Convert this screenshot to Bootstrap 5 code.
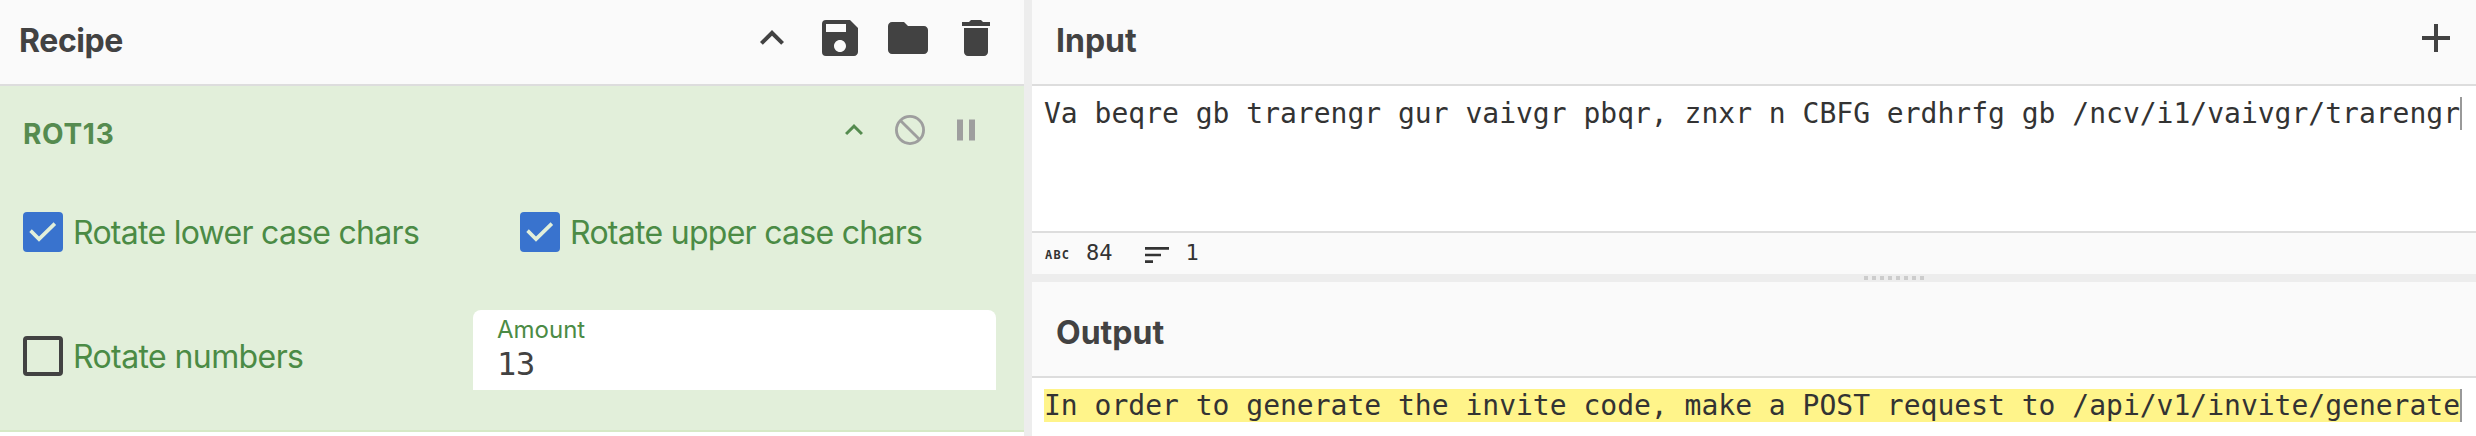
<!DOCTYPE html>
<html lang="en">
<head>
<meta charset="utf-8">
<title>Recipe</title>
<link href="https://cdn.jsdelivr.net/npm/bootstrap@5.3.0/dist/css/bootstrap.min.css" rel="stylesheet">
<style>
body{width:2476px;height:436px;overflow:hidden;background:#ededed;color:#424242;font-family:Inter,sans-serif}
svg{display:block;fill:currentColor;flex:none}
.recipe-pane{width:1024px}
.io-pane{width:1444px;margin-left:8px}
.pane-head{background:#fafafa;border-bottom:2px solid #ddd;height:86px;padding:0 16px 8px 24px}
.recipe-head{padding-left:19px;padding-right:24px}
.output-head{height:96px;padding-top:2px;padding-bottom:0}
.pane-title{font-size:32px;line-height:40px;font-weight:700;padding-top:5px}
.recipe-head .pane-title{letter-spacing:-.4px}
.operation{height:346px;background:#e2efda;border-bottom:2px solid #d6e9c6}
.op-head{padding:26px 40px 0 23px}
.op-name{font-size:28px;line-height:40px;font-weight:700;color:#558b4f;margin-top:2px;letter-spacing:.7px}
.op-icons{gap:20px;color:#9e9e9e}
.arg-row{padding:58px 0 0 23px}
.arg-row + .arg-row{padding-top:57px}
.arg-first{width:497px}
.arg-numbers{width:450px;margin-top:26px}
.box{width:40px;height:40px;border-radius:4px;background:#3973ce;color:#e2efda;margin-right:10px}
.box-off{background:none;border:4px solid #424242}
.arg-label{font-size:32px;line-height:41px;color:#4b8b45;letter-spacing:-.72px}
.arg-numbers .arg-label{letter-spacing:-.6px}
.amount{width:523px;height:80px;background:#fff;border-radius:8px 8px 0 0;padding:6px 24px}
.amount-label{font-size:24px;line-height:28px;color:#4b8b45;margin-bottom:2px}
.mono{font-family:"DejaVu Sans Mono",monospace;white-space:pre}
.amount-value{font-size:32px;line-height:36px;letter-spacing:-.2px}
.editor{padding:11px 0 0 12px}
.code-line{font-size:28px;line-height:33px;color:#333}
.caret{width:2px;height:33px;background:#999}
.hl{background:#fff48a}
.statusbar{height:43px;background:#fafafa;border-top:2px solid #ddd;font-size:22px;line-height:30px;color:#333;padding-left:13px}
.abc{font-size:12px;font-weight:700;letter-spacing:1.2px;width:41px;padding-top:3px}
.count{padding-bottom:2px}
.lines-icon{margin:3px 13px 0 28px}
.gutter{height:8px;padding-left:832px}
.grip{width:60px;height:4px;background:repeating-linear-gradient(90deg,#ccc 0 4px,transparent 4px 8px)}
</style>
</head>
<body class="d-flex">
<section class="recipe-pane bg-white">
  <header class="pane-head recipe-head d-flex align-items-center justify-content-between">
    <span class="pane-title">Recipe</span>
    <div class="d-flex" style="gap:20px">
      <svg width="48" height="48" viewBox="0 0 24 24"><path d="M12 8l-6 6 1.41 1.41L12 10.83l4.59 4.58L18 14z"/></svg>
      <svg width="48" height="48" viewBox="0 0 24 24"><path d="M17 3H5a2 2 0 0 0-2 2v14a2 2 0 0 0 2 2h14c1.1 0 2-.9 2-2V7l-4-4zm-5 16c-1.66 0-3-1.34-3-3s1.34-3 3-3 3 1.34 3 3-1.34 3-3 3zm3-10H5V5h10v4z"/></svg>
      <svg width="48" height="48" viewBox="0 0 24 24"><path d="M10 4H4c-1.1 0-1.99.9-1.99 2L2 18c0 1.1.9 2 2 2h16c1.1 0 2-.9 2-2V8c0-1.1-.9-2-2-2h-8l-2-2z"/></svg>
      <svg width="48" height="48" viewBox="0 0 24 24"><path d="M6 19c0 1.1.9 2 2 2h8c1.1 0 2-.9 2-2V7H6v12zM19 4h-3.5l-1-1h-5l-1 1H5v2h14V4z"/></svg>
    </div>
  </header>
  <div class="operation">
    <div class="op-head d-flex justify-content-between">
      <span class="op-name">ROT13</span>
      <div class="op-icons d-flex">
        <svg width="36" height="36" viewBox="0 0 24 24" color="#558b4f"><path d="M12 8l-6 6 1.41 1.41L12 10.83l4.59 4.58L18 14z"/></svg>
        <svg width="36" height="36" viewBox="0 0 24 24"><g fill="none" stroke="currentColor" stroke-width="1.9"><circle cx="12" cy="12" r="9.050"/><path d="M5.600 5.600l12.800 12.800"/></g></svg>
        <svg width="36" height="36" viewBox="0 0 24 24"><path d="M6 19h4V5H6v14zm8-14v14h4V5h-4z"/></svg>
      </div>
    </div>
    <div class="arg-row d-flex">
      <div class="arg-first d-flex"><span class="box"><svg width="40" height="40" viewBox="0 0 40 40"><path d="M6.300 20l2.500-2.800 7.200 7.300L30.600 10.300l2.500 2.700L16 29.700z"/></svg></span><span class="arg-label">Rotate lower case chars</span></div>
      <div class="d-flex"><span class="box"><svg width="40" height="40" viewBox="0 0 40 40"><path d="M6.300 20l2.500-2.800 7.200 7.300L30.600 10.300l2.500 2.700L16 29.700z"/></svg></span><span class="arg-label">Rotate upper case chars</span></div>
    </div>
    <div class="arg-row d-flex align-items-start">
      <div class="arg-numbers d-flex"><span class="box box-off"></span><span class="arg-label">Rotate numbers</span></div>
      <div class="amount"><div class="amount-label">Amount</div><div class="mono amount-value">13</div></div>
    </div>
  </div>
</section>
<section class="io-pane">
  <header class="pane-head d-flex align-items-center justify-content-between">
    <span class="pane-title">Input</span>
    <svg width="48" height="48" viewBox="0 0 24 24"><path d="M19 13h-6v6h-2v-6H5v-2h6V5h2v6h6z"/></svg>
  </header>
  <div class="editor bg-white" style="height:145px">
    <div class="mono code-line d-flex"><span>Va beqre gb trarengr gur vaivgr pbqr, znxr n CBFG erdhrfg gb /ncv/i1/vaivgr/trarengr</span><span class="caret"></span></div>
  </div>
  <div class="statusbar mono d-flex align-items-center"><span class="abc">ABC</span><span class="count">84</span><svg class="lines-icon" width="32" height="32" viewBox="0 0 24 24"><path d="M3 18h6v-2H3v2zM3 6v2h18V6H3zm0 7h12v-2H3v2z"/></svg><span class="count">1</span></div>
  <div class="gutter d-flex align-items-center"><div class="grip"></div></div>
  <header class="pane-head output-head d-flex align-items-center">
    <span class="pane-title">Output</span>
  </header>
  <div class="editor bg-white" style="height:58px">
    <div class="mono code-line d-flex"><span class="hl">In order to generate the invite code, make a POST request to /api/v1/invite/generate</span><span class="caret"></span></div>
  </div>
</section>
<script src="https://cdn.jsdelivr.net/npm/bootstrap@5.3.0/dist/js/bootstrap.bundle.min.js"></script>
</body>
</html>
